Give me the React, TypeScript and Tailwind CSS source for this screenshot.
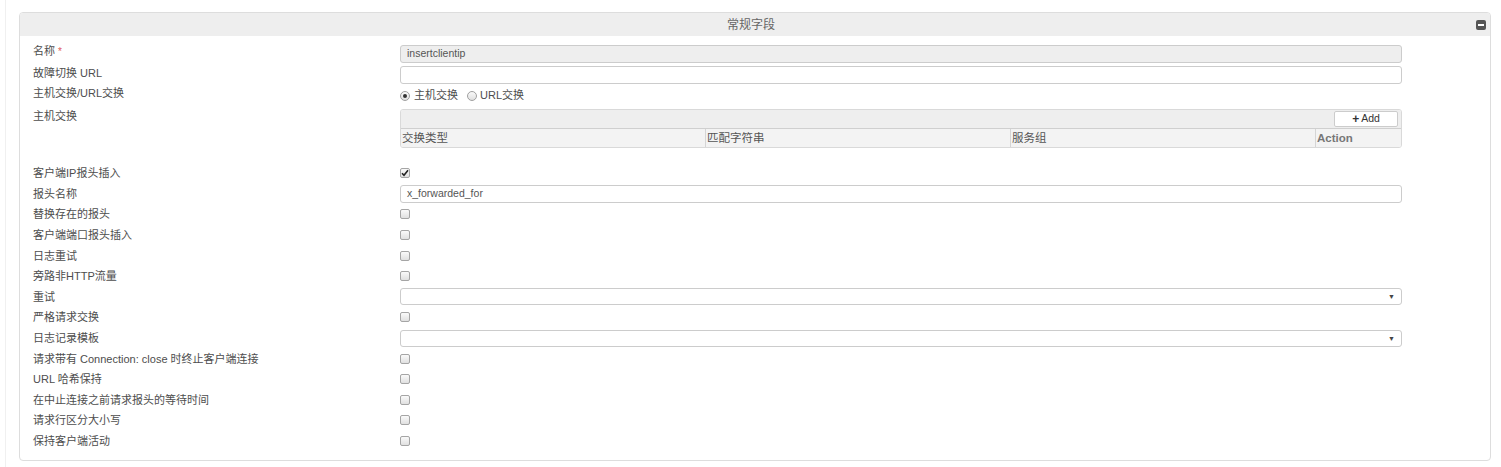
import React from "react";

const font = "font-['Liberation_Sans','Noto_Sans_CJK_SC',sans-serif]";

function Label({ children, req, up = "" }: { children: React.ReactNode; req?: boolean; up?: string }) {
  return (
    <div className={"w-[367px] shrink-0 text-[11px] leading-[14px] text-[#4d4d4d] " + up}>
      {children}
      {req && <span className="text-[#e05a5a] ml-[3px] text-[10px]">*</span>}
    </div>
  );
}

function Checkbox({ checked }: { checked?: boolean }) {
  return (
    <div className="w-[10px] h-[10px] rounded-[2px] border border-[#a5a5a5] bg-gradient-to-b from-[#fafafa] to-[#e0e0e0] flex items-center justify-center">
      {checked && (
        <svg width="8" height="8" viewBox="0 0 8 8">
          <path d="M1 4.2 L3 6.3 L7 1.3" stroke="#222" strokeWidth="1.6" fill="none" />
        </svg>
      )}
    </div>
  );
}

function Radio({ checked }: { checked?: boolean }) {
  return (
    <div className="w-[10px] h-[10px] rounded-full border border-[#a0a0a0] bg-gradient-to-b from-[#fafafa] to-[#e0e0e0] flex items-center justify-center">
      {checked && <div className="w-[4px] h-[4px] rounded-full bg-[#333]" />}
    </div>
  );
}

function TextInput({ value, disabled }: { value?: string; disabled?: boolean }) {
  return (
    <div
      className={
        "flex-1 h-[18px] border border-[#cccccc] rounded-[3px] px-[6px] flex items-center text-[10.5px] text-[#555] " +
        (disabled ? "bg-[#eeeeee]" : "bg-white")
      }
    >
      {value}
    </div>
  );
}

function Select() {
  return (
    <div className="flex-1 h-[17px] border border-[#cccccc] rounded-[3px] bg-white flex items-center justify-end pr-[6px]">
      <span className="text-[7px] leading-none text-[#444]">▼</span>
    </div>
  );
}

function Row({
  label,
  req,
  children,
  h = "h-[20.6px]",
  up = "",
}: {
  label: string;
  req?: boolean;
  children: React.ReactNode;
  h?: string;
  up?: string;
}) {
  return (
    <div className={"flex items-center " + h}>
      <Label req={req} up={up}>
        {label}
      </Label>
      <div className="flex-1 flex items-center">{children}</div>
    </div>
  );
}

export default function App() {
  const checkRows1 = ["替换存在的报头", "客户端端口报头插入", "日志重试", "旁路非HTTP流量"];
  const checkRows2 = [
    "请求带有 Connection: close 时终止客户端连接",
    "URL 哈希保持",
    "在中止连接之前请求报头的等待时间",
    "请求行区分大小写",
    "保持客户端活动",
  ];
  return (
    <div className={"w-[1501px] h-[467px] bg-white flex " + font}>
      <div className="w-[5px] shrink-0" />
      <div className="flex-1 border-l border-[#f0f0f0] pt-[12px] pl-[13px] pr-[10px]">
        <div className="border border-[#dddddd] rounded-[4px]">
          <div className="h-[23px] bg-[#eeeeee] rounded-t-[3px] flex items-center">
            <div className="flex-1 text-center text-[12px] text-[#666] pl-[6px]">常规字段</div>
            <div className="w-[10px] h-[10px] rounded-[2px] bg-[#555] flex items-center justify-center mr-[4px]">
              <div className="w-[6px] h-[2px] bg-white" />
            </div>
          </div>
          <div className="pt-[7px] pl-[13px] pr-[88px] pb-[9px]">
            <Row label="名称" req h="h-[21px]" up="mb-[5px]">
              <TextInput value="insertclientip" disabled />
            </Row>
            <Row label="故障切换 URL" h="h-[21px]" up="mb-[4px]">
              <TextInput />
            </Row>
            <Row label="主机交换/URL交换" h="h-[21px]" up="mb-[6px]">
              <div className="flex items-center text-[11px] text-[#4d4d4d]">
                <Radio checked />
                <span className="ml-[4px]">主机交换</span>
                <span className="ml-[9px]">
                  <Radio />
                </span>
                <span className="ml-[3px]">URL交换</span>
              </div>
            </Row>
            <div className="flex items-start h-[57px]">
              <div className="pt-[3px]">
                <Label>主机交换</Label>
              </div>
              <div className="flex-1 mt-[3px] border border-[#d9d9d9] rounded-[3px] overflow-hidden">
                <div className="h-[19px] bg-[#eeeeee] border-b border-[#cfcfcf] flex items-center justify-end pr-[3px]">
                  <div className="w-[64px] h-[16px] bg-white border border-[#cccccc] rounded-[2px] flex items-center justify-center text-[10.5px] text-[#333]">
                    <span className="font-bold text-[12px] leading-none mr-[2px]">+</span>Add
                  </div>
                </div>
                <div className="h-[18px] bg-[#f3f3f3] grid grid-cols-[305px_305px_305px_1fr] text-[11.5px] leading-[18px] text-[#555]">
                  <div className="border-r border-[#d5d5d5] px-[1px]">交换类型</div>
                  <div className="border-r border-[#d5d5d5] px-[1px]">匹配字符串</div>
                  <div className="border-r border-[#d5d5d5] px-[1px]">服务组</div>
                  <div className="px-[1px] font-bold text-[#777]">Action</div>
                </div>
              </div>
            </div>
            <Row label="客户端IP报头插入">
              <Checkbox checked />
            </Row>
            <Row label="报头名称">
              <TextInput value="x_forwarded_for" />
            </Row>
            {checkRows1.map((l) => (
              <Row key={l} label={l}>
                <Checkbox />
              </Row>
            ))}
            <Row label="重试">
              <Select />
            </Row>
            <Row label="严格请求交换">
              <Checkbox />
            </Row>
            <Row label="日志记录模板">
              <Select />
            </Row>
            {checkRows2.map((l) => (
              <Row key={l} label={l}>
                <Checkbox />
              </Row>
            ))}
          </div>
        </div>
      </div>
    </div>
  );
}
